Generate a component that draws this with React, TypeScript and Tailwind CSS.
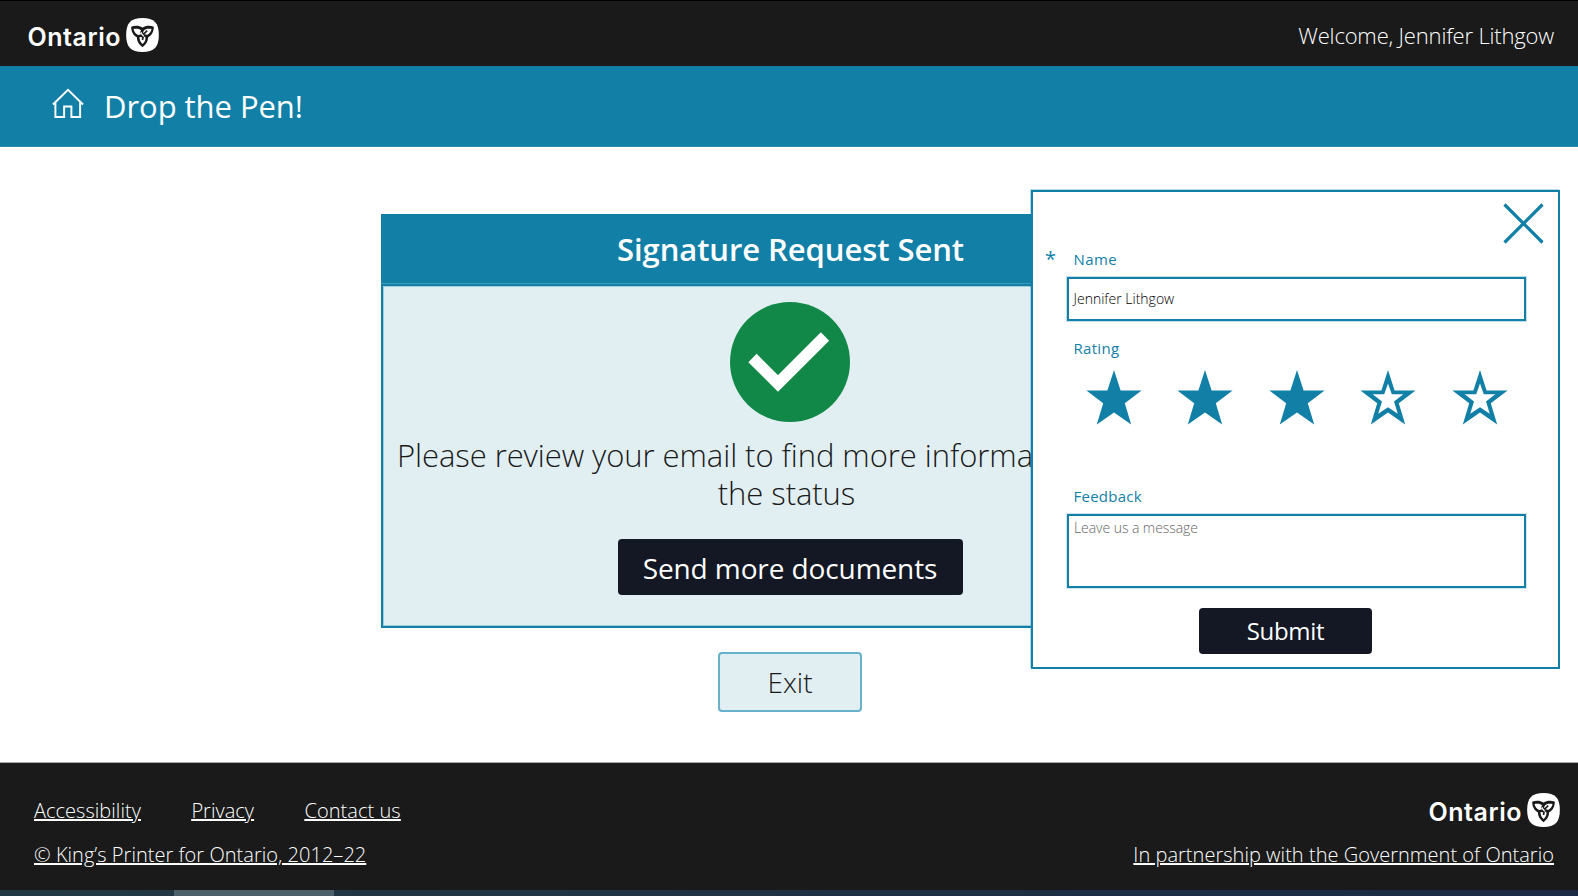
import React from "react";

function OntarioLogo() {
  return (
    <div className="flex h-[34px] w-[132px] items-center justify-between text-white">
      <span className="whitespace-nowrap pl-[0.5px] pt-[4px] font-['Inter'] text-[25px] font-semibold leading-[32px] tracking-[0.55px]">Ontario</span>
      <svg className="h-[34px] w-[33px] shrink-0" viewBox="0 0 98 102">
        <path d="M49 0C84 0 98 15 98 51S84 102 49 102 0 87 0 51 14 0 49 0Z" fill="#fff" />
        <path
          d="M15 26C27 22 40 23 49 29C58 23 71 22 83 26C83 40 77 52 66 58C66 70 60 80 49 88C38 80 32 70 32 58C21 52 15 40 15 26Z"
          fill="#1a1a1a"
        />
        <path d="M22 33C31 31 41 32 45 38C41 41 42 46 46 48C42 50 39 51 36 51C29 48 24 42 22 33Z" fill="#fff" />
        <path d="M76 33C67 31 58 32 53 38C49 43 51 49 56 49C60 50 61 51 64 50C71 46 75 41 76 33Z" fill="#fff" />
        <path d="M40 57C46 56 48 60 53 57C56 55 58 57 58 60C58 67 55 73 49 78C43 73 40 66 40 57Z" fill="#fff" />
        <path d="M49 29V36M44 41L52 48L49 66M53 48L63 38" fill="none" stroke="#1a1a1a" strokeWidth="5" />
        <path d="M45 43C45 50 50 51 53 55" fill="none" stroke="#fff" strokeWidth="4" />
      </svg>
    </div>
  );
}

const STAR = "M27 0L33.6 20.5H54.6L37.8 33.2L44.2 54.5L27 42.5L9.8 54.5L16.2 33.2L-.6 20.5H20.4Z";

function Star({ filled }: { filled: boolean }) {
  return (
    <svg className="h-[55px] w-[54px] overflow-visible" viewBox="0 0 54 55">
      <path d={STAR} fill="#127fa7" />
      {!filled && <path d="M27 13.5L30.8 24.3H42.3L33 31.5L36.8 43.8L27 37.2L17.2 43.8L21 31.5L11.7 24.3H23.2Z" fill="#fff" />}
    </svg>
  );
}

function FeedbackDialog() {
  return (
    <section className="absolute left-[1031px] top-[190px] flex h-[479px] w-[529px] flex-col border-2 border-[#127fa7] bg-white text-[#127fa7] shadow-[-1px_-1px_0_rgba(18,127,167,0.3)]">
      <button className="absolute right-[14px] top-[11px] h-[41px] w-[41px]" aria-label="Close">
        <svg className="h-[41px] w-[41px]" viewBox="0 0 41 41">
          <path d="M1.5 1.5L39.5 39.5M39.5 1.5L1.5 39.5" stroke="#127fa7" strokeWidth="3.2" />
        </svg>
      </button>
      <div className="mt-[55px] flex h-[24px] items-center">
        <span className="w-[29px] pl-[12px] text-[20px] leading-none">*</span>
        <span className="pl-[11.5px] text-[15px] tracking-[0.4px]">Name</span>
      </div>
      <div className="ml-[34px] mt-[6px] flex h-[44px] w-[459px] items-center border-2 border-[#127fa7] pb-[1px] pl-[4.5px] text-[14px] font-light text-black shadow-[0_0_0_1px_rgba(18,127,167,0.25)]">
        <span>Jennifer Lithgow</span>
      </div>
      <span className="ml-[40.5px] mt-[16px] text-[15px] leading-[22px] tracking-[0.3px]">Rating</span>
      <div className="ml-[53.5px] mt-[11px] flex w-[420px] justify-between">
        <Star filled />
        <Star filled />
        <Star filled />
        <Star filled={false} />
        <Star filled={false} />
      </div>
      <span className="ml-[40.5px] mt-[60px] text-[15px] leading-[22px] tracking-[0.25px]">Feedback</span>
      <div className="ml-[34px] mt-[7px] h-[74px] w-[459px] border-2 border-[#127fa7] pl-[5px] pt-[2px] text-[14px] font-light leading-[20px] tracking-[-0.06px] text-[#666] shadow-[0_0_0_1px_rgba(18,127,167,0.2)]">
        Leave us a message
      </div>
      <button className="ml-[166px] mt-[20px] h-[46px] w-[173px] rounded-[4px] bg-[#141824] text-[24px] leading-[46px] tracking-[-0.3px] text-white">Submit</button>
    </section>
  );
}

export default function App() {
  return (
    <div className="relative flex h-[896px] w-[1578px] flex-col overflow-hidden bg-white font-['Open_Sans',sans-serif]">
      <header className="flex h-[66px] shrink-0 items-center justify-between border-t border-black bg-[#1a1a1a] pl-[27px] pr-[24px] pt-[3px]">
        <OntarioLogo />
        <span className="whitespace-nowrap text-[22px] font-light tracking-[-0.18px] text-white">Welcome, Jennifer Lithgow</span>
      </header>
      <nav className="flex h-[81px] shrink-0 items-center border-b border-[#2a8cb2] bg-[#127fa7] pl-[52px] text-white">
        <svg className="mt-[-6px] h-[31px] w-[32px]" viewBox="0 0 33 31" fill="none" stroke="#fff" strokeWidth="2">
          <path d="M1 16.5L16.5 1.5L32 16.5M3.5 14V29.5H12.5V18.5H20V29.5H29V14" />
        </svg>
        <span className="mt-[-1px] ml-[20px] whitespace-nowrap text-[31px] leading-[40px] tracking-[-0.05px]">Drop the Pen!</span>
      </nav>
      <main className="flex h-[615px] shrink-0 flex-col items-center pl-[2px] pt-[67px]">
        <section className="flex h-[414px] w-[818px] flex-col">
          <h1 className="h-[69px] bg-[#127fa7] pl-[1px] text-center text-[31px] font-semibold leading-[71px] tracking-[-0.07px] text-white">Signature Request Sent</h1>
          <div className="h-px shrink-0 bg-[#3a98ba]" />
          <div className="flex h-[344px] flex-col items-center border-2 border-[#127fa7] bg-[#e1eff3] pt-[16px] shadow-[inset_0_0_0_1px_rgba(18,127,167,0.3)]">
            <svg className="h-[120px] w-[120px] shrink-0" viewBox="0 0 120 120">
              <circle cx="60" cy="60" r="60" fill="#118847" />
              <path d="M22.5 56L48 81.5L95 34.5" fill="none" stroke="#fff" strokeWidth="11.7" />
            </svg>
            <p className="mr-[7px] mt-[14px] whitespace-nowrap text-center text-[31px] font-light leading-[38px] tracking-[-0.06px] text-[#1a1a1a]">
              Please review your email to find more information about
              <br />
              the status
            </p>
            <button className="mt-[27px] h-[56px] w-[345px] shrink-0 rounded-[4px] bg-[#141824] text-[28px] leading-[58px] tracking-[-0.1px] text-white">Send more documents</button>
          </div>
        </section>
        <button className="mt-[24px] h-[60px] w-[144px] rounded-[4px] border-2 border-[#67b1cb] bg-[#e1eff3] text-[28px] font-light text-[#1a1a1a]">Exit</button>
      </main>
      <footer className="flex h-[128px] shrink-0 justify-between border-t border-[#a8a8a8] bg-[#1a1a1a] pl-[34px] pr-[18px] text-[20px] font-light tracking-[0.03px] text-white">
        <div className="flex flex-col pt-[33px]">
          <div className="flex h-[28px] gap-[50.5px] underline">
            <a>Accessibility</a>
            <a>Privacy</a>
            <a>Contact us</a>
          </div>
          <a className="mt-[16px] whitespace-nowrap underline">© King’s Printer for Ontario, 2012–22</a>
        </div>
        <div className="flex flex-col items-end pt-[30px]">
          <OntarioLogo />
          <a className="mr-[6px] mt-[13px] whitespace-nowrap underline">In partnership with the Government of Ontario</a>
        </div>
      </footer>
      <div className="flex h-[6px] shrink-0 bg-gradient-to-r from-[#223a44] to-[#1b2944]">
        <div className="ml-[174px] w-[160px] bg-[#4e6069]" />
      </div>
      <FeedbackDialog />
    </div>
  );
}
